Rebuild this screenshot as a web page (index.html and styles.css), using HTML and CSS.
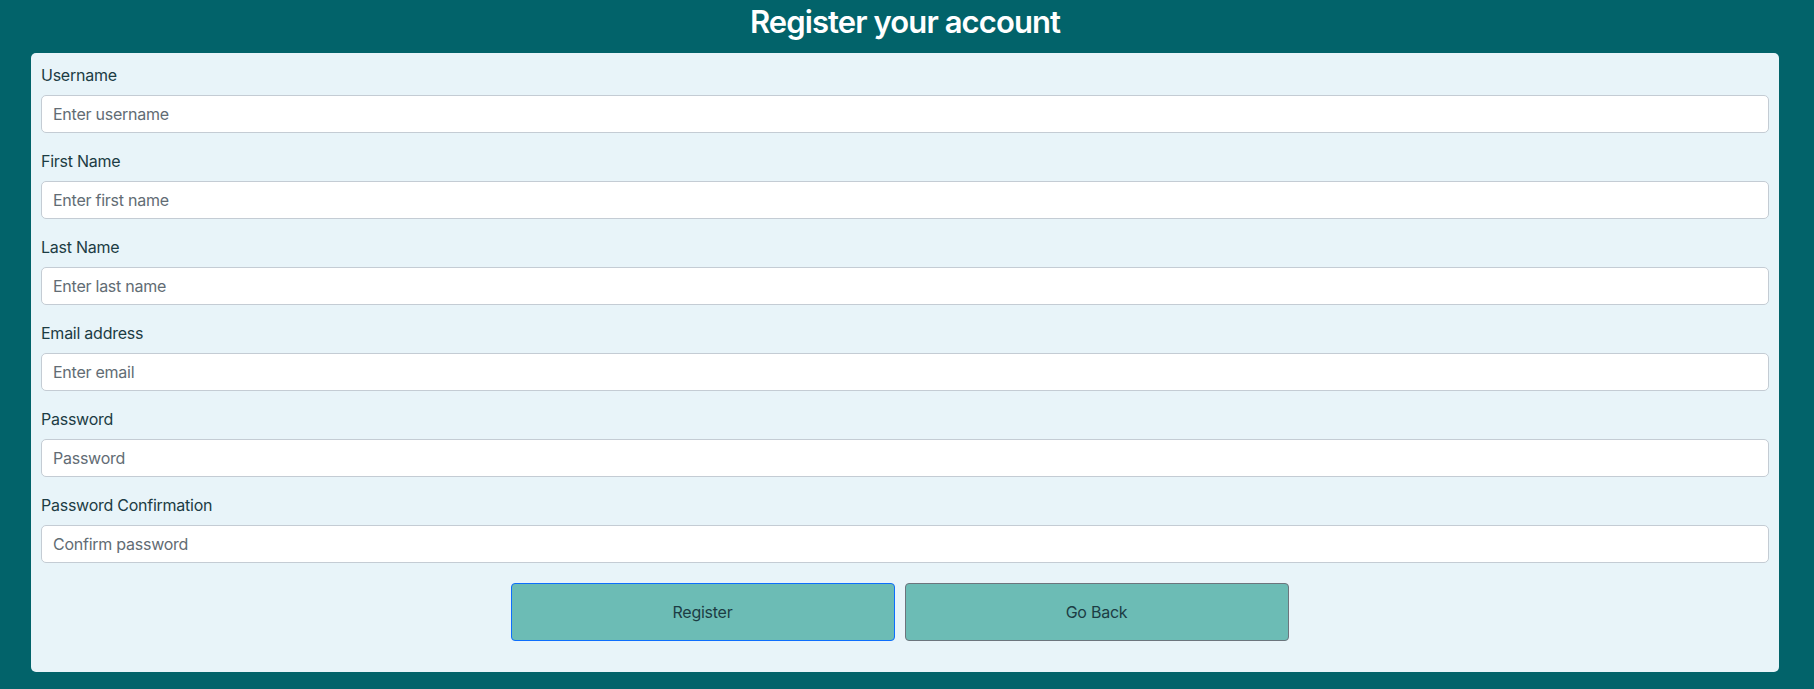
FILE: index.html
```html
<!DOCTYPE html>
<html lang="en">
<head>
<meta charset="utf-8">
<title>Register your account</title>
<link rel="stylesheet" href="styles.css">
</head>
<body>
  <h1 class="title">Register your account</h1>
  <form class="card">
    <div class="field">
      <label class="label" for="username">Username</label>
      <input class="input" id="username" type="text" placeholder="Enter username">
    </div>
    <div class="field">
      <label class="label" for="first">First Name</label>
      <input class="input" id="first" type="text" placeholder="Enter first name">
    </div>
    <div class="field">
      <label class="label" for="last">Last Name</label>
      <input class="input" id="last" type="text" placeholder="Enter last name">
    </div>
    <div class="field">
      <label class="label" for="email">Email address</label>
      <input class="input" id="email" type="email" placeholder="Enter email">
    </div>
    <div class="field">
      <label class="label" for="pw">Password</label>
      <input class="input" id="pw" type="password" placeholder="Password">
    </div>
    <div class="field">
      <label class="label" for="pw2">Password Confirmation</label>
      <input class="input" id="pw2" type="password" placeholder="Confirm password">
    </div>
    <div class="actions">
      <button type="button" class="btn btn-primary">Register</button>
      <button type="button" class="btn btn-secondary">Go Back</button>
    </div>
  </form>
</body>
</html>
```
FILE: styles.css
```css
* { box-sizing: border-box; }
html, body {
  margin: 0;
  padding: 0;
}
body {
  background: #02636a;
  font-family: Inter, "Noto Sans", sans-serif;
  font-size: 16px;
  line-height: 24px;
  letter-spacing: -0.25px;
  color: #1c3c44;
  padding: 0 35px 18px 31px;
}
.title {
  margin: 0;
  padding: 3px 0 12px;
  text-align: center;
  color: #ffffff;
  font-size: 31px;
  font-weight: 600;
  line-height: 38px;
  letter-spacing: -0.9px;
}
.card {
  background: #e8f4f9;
  border-radius: 5px;
  padding: 10px 10px 31px 10px;
  display: flex;
  flex-direction: column;
}
.field {
  display: flex;
  flex-direction: column;
  margin-bottom: 16px;
}
.label {
  display: block;
  margin-bottom: 8px;
  color: #1c3c44;
}
.input {
  display: block;
  width: 100%;
  height: 38px;
  padding: 6px 11px;
  font-family: inherit;
  font-size: 16px;
  line-height: 24px;
  letter-spacing: -0.25px;
  color: #212529;
  background: #ffffff;
  border: 1px solid #c4ccd4;
  border-radius: 5px;
  outline: none;
}
.input::placeholder {
  color: #626c74;
  opacity: 1;
}
.actions {
  display: flex;
  justify-content: center;
  gap: 10px;
  margin-top: 4px;
  padding-right: 11px;
}
.btn {
  width: 384px;
  height: 58px;
  font-family: inherit;
  font-size: 16px;
  letter-spacing: -0.25px;
  color: #1c3c44;
  background: #6cbcb5;
  border-radius: 4px;
  cursor: pointer;
}
.btn-primary { border: 1px solid #0d6efd; }
.btn-secondary { border: 1px solid #6c757d; }
```
